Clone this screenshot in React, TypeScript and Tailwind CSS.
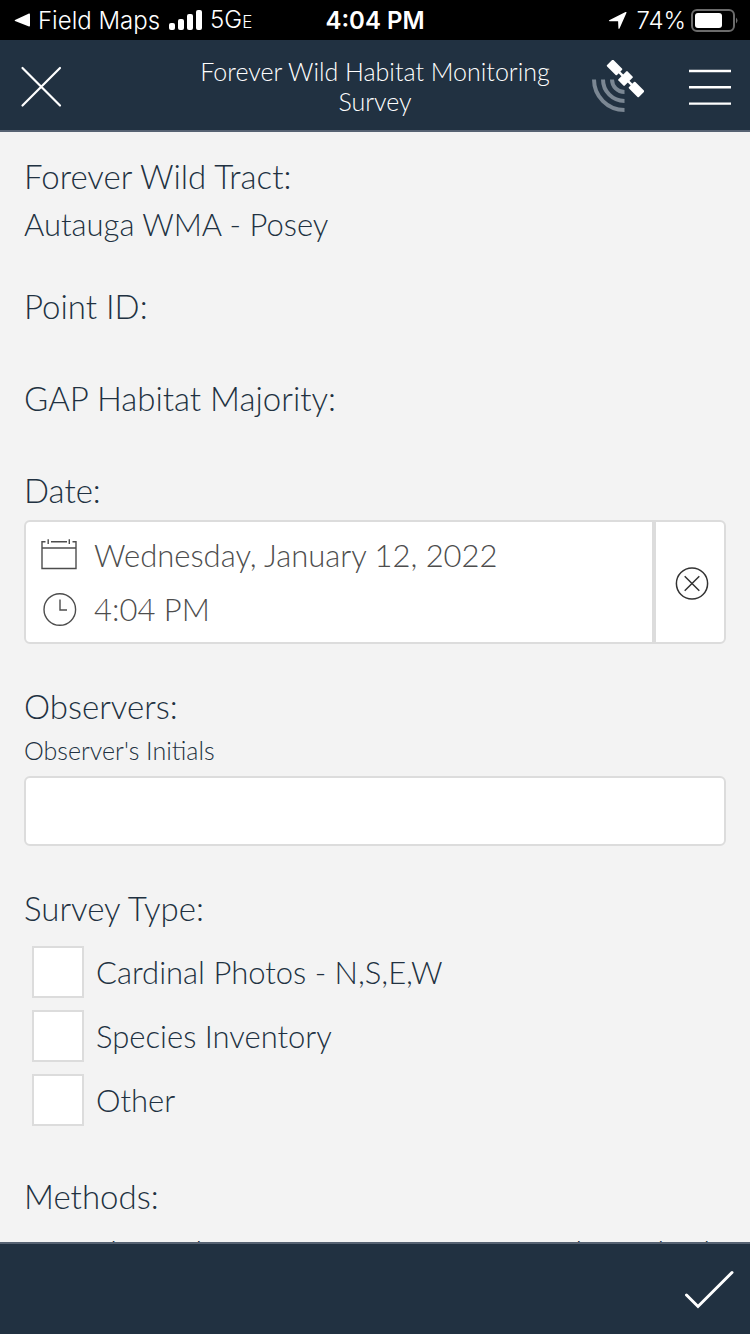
import { useState } from 'react';
import type { ReactNode } from 'react';

const surveyTypes = ['Cardinal Photos - N,S,E,W', 'Species Inventory', 'Other'];

const StatusBar = () => (
    <div className="grid h-10 shrink-0 grid-cols-[1fr_auto_1fr] items-center bg-black pl-3 pr-3 font-['Inter',sans-serif] text-2xl leading-10 text-white">
        <div className="flex items-center gap-2 whitespace-nowrap">
            <a href="#" className="flex items-center gap-2">
                <svg className="h-4 w-[18px]" viewBox="0 0 18 16" fill="currentColor">
                    <path d="M3 7 L17 .5 Q18 .2 18 1.5 V12.5 Q18 13.8 17 13.5 L3 8 Q2.2 7.5 3 7Z" />
                </svg>
                Field Maps
            </a>
            <svg className="ml-px h-[22px] w-[33px]" viewBox="0 0 33 22" fill="currentColor">
                <rect x="0" y="13" width="6" height="7" rx="2" />
                <rect x="9" y="9" width="6" height="11" rx="2" />
                <rect x="18" y="4" width="6" height="16" rx="2" />
                <rect x="27" y="0" width="6" height="20" rx="2" />
            </svg>
            <span>
                5G<span className="text-[17px]">E</span>
            </span>
        </div>
        <span className="font-semibold">4:04 PM</span>
        <div className="flex items-center justify-end gap-1">
            <svg className="h-5 w-5" viewBox="0 0 20 20" fill="currentColor">
                <path d="M1.2 9.2 L17.5 1 Q19 .5 18.4 2 L11.5 17.5 Q10.6 18.5 10.4 17 L10.1 10.2 L1.8 10.2 Q.2 10 1.2 9.2Z" />
            </svg>
            <span className="pl-1">74%</span>
            <svg className="h-6 w-12" viewBox="0 0 48 24">
                <rect x="2" y="1" width="42" height="21" rx="5" fill="none" stroke="#6b6b6b" strokeWidth="2" />
                <rect x="5" y="4" width="27" height="15" rx="3" fill="white" />
                <path d="M46 8.5 Q49 11.5 46 14.5Z" fill="#6b6b6b" />
            </svg>
        </div>
    </div>
);

const SatelliteIcon = () => (
    <svg className="h-[54px] w-[54px]" viewBox="0 0 54 54">
        <g fill="none" stroke="#7b8793" strokeWidth="4">
            <path d="M4 19.5 A30.5 30.5 0 0 0 34.5 50" />
            <path d="M13 19.5 A21.5 21.5 0 0 0 34.5 41" />
            <path d="M22 19.5 A12.5 12.5 0 0 0 34.5 32" />
        </g>
        <g fill="white" transform="translate(35.5 18.5) rotate(45)">
            <rect x="-22.5" y="-4.5" width="14" height="9" rx="1" />
            <rect x="8.5" y="-4.5" width="14" height="9" rx="1" />
            <rect x="-4.5" y="-6.5" width="9" height="13" rx="1" />
            <rect x="-9" y="-1.2" width="18" height="2.4" />
        </g>
    </svg>
);

const Header = () => (
    <header className="grid shrink-0 grid-cols-[160px_1fr_160px] items-center border-b-2 border-[#566272] bg-[#213141] text-white">
        <button aria-label="Close" className="ml-5 w-fit pt-1">
            <svg className="h-[42px] w-[42px]" viewBox="0 0 42 42" stroke="currentColor" strokeWidth="2.2" strokeLinecap="round">
                <path d="M2.5 2 L40 39.5 M40 2 L2.5 39.5" />
            </svg>
        </button>
        <h1 className="px-6 pb-[14px] pt-4 text-center text-[25px] leading-[30px]">Forever Wild Habitat Monitoring Survey</h1>
        <div className="flex items-center justify-between pr-[18px] pt-1">
            <button aria-label="Location status">
                <SatelliteIcon />
            </button>
            <button aria-label="Menu">
                <svg className="h-[38px] w-[44px]" viewBox="0 0 44 38" stroke="currentColor" strokeWidth="2.4">
                    <path d="M1 3 H43 M1 19.3 H43 M1 35.6 H43" />
                </svg>
            </button>
        </div>
    </header>
);

const Field = ({ label, children }: { label: string; children?: ReactNode }) => (
    <section>
        <h2 className="text-[33px] leading-10">{label}</h2>
        {children}
    </section>
);

const DateTimeField = () => {
    const [date, setDate] = useState('Wednesday, January 12, 2022');
    const [time, setTime] = useState('4:04 PM');

    const clear = () => {
        setDate('');
        setTime('');
    };

    return (
        <div className="mt-[10px] flex h-[124px] rounded-md border-2 border-[#dcdcdc] bg-white text-[#4d4d4d]">
            <div className="flex flex-1 flex-col justify-center gap-[14px] border-r-4 border-[#dcdcdc] pl-[14px]">
                <label className="flex items-center gap-4">
                    <svg className="h-10 w-[38px]" viewBox="0 0 38 40" fill="none" stroke="currentColor" strokeWidth="1.4">
                        <path d="M5.5 6.7 H2 V33.5 H36 V6.7 H32.5 M11 6.7 H27 M2 13 H36 M8.2 4.2 V9 M29.3 4.2 V9" />
                    </svg>
                    <input
                        aria-label="Date"
                        className="min-w-0 flex-1 outline-none"
                        value={date}
                        onChange={(e) => setDate(e.target.value)}
                    />
                </label>
                <label className="flex items-center gap-4">
                    <svg className="h-10 w-[38px]" viewBox="0 0 38 40" fill="none" stroke="currentColor" strokeWidth="1.4">
                        <circle cx="19.8" cy="20.5" r="15.8" />
                        <path d="M20 10.5 V21 H27" />
                    </svg>
                    <input
                        aria-label="Time"
                        className="min-w-0 flex-1 outline-none"
                        value={time}
                        onChange={(e) => setTime(e.target.value)}
                    />
                </label>
            </div>
            <button aria-label="Clear date" className="flex w-[68px] items-center justify-center pl-1" onClick={clear}>
                <svg className="h-9 w-9" viewBox="0 0 36 36" fill="none" stroke="#333333" strokeWidth="1.5">
                    <circle cx="18" cy="19.5" r="15.6" />
                    <path d="M10.7 12.2 L25.3 26.8 M25.3 12.2 L10.7 26.8" />
                </svg>
            </button>
        </div>
    );
};

const App = () => {
    const [checked, setChecked] = useState<string[]>([]);

    const toggle = (type: string) => {
        setChecked(checked.includes(type) ? checked.filter((t) => t !== type) : [...checked, type]);
    };

    return (
        <div className="flex h-screen flex-col bg-[#f3f3f3] font-['Lato',sans-serif] font-light text-[#213141]">
            <StatusBar />
            <Header />
            <main className="flex min-h-0 flex-1 flex-col gap-[42px] overflow-hidden px-6 pt-6 text-[31px] leading-10">
                <Field label="Forever Wild Tract:">
                    <p className="mt-2">Autauga WMA - Posey</p>
                </Field>
                <Field label="Point ID:">
                    <div className="h-[10px]" />
                </Field>
                <Field label="GAP Habitat Majority:">
                    <div className="h-[10px]" />
                </Field>
                <Field label="Date:">
                    <DateTimeField />
                </Field>
                <Field label="Observers:">
                    <label htmlFor="initials" className="mt-2 block text-[25px] leading-8">
                        Observer's Initials
                    </label>
                    <input
                        id="initials"
                        className="mt-[10px] block h-[70px] w-full rounded-md border-2 border-[#dcdcdc] bg-white px-4 outline-none"
                    />
                </Field>
                <Field label="Survey Type:">
                    <div className="mt-[18px] flex flex-col gap-3 pb-2 pl-2">
                        {surveyTypes.map((type) => (
                            <label key={type} className="flex items-center gap-3">
                                <input
                                    type="checkbox"
                                    className="h-[52px] w-[52px] appearance-none border-2 border-[#dcdcdc] bg-white checked:bg-[#213141]"
                                    checked={checked.includes(type)}
                                    onChange={() => toggle(type)}
                                />
                                {type}
                            </label>
                        ))}
                    </div>
                </Field>
                <Field label="Methods:">
                    <p className="mt-4 flex justify-between pr-4">
                        <span>Record our photos</span>
                        <span>each Cardinal</span>
                    </p>
                </Field>
            </main>
            <footer className="flex h-[92px] shrink-0 items-center justify-end border-t-2 border-[#566272] bg-[#213141] pr-4 text-white">
                <button aria-label="Submit survey">
                    <svg className="h-10 w-[50px]" viewBox="0 0 50 40" fill="none" stroke="currentColor" strokeWidth="3" strokeLinecap="round">
                        <path d="M2.5 26 L14 37.5 L48 3.5" />
                    </svg>
                </button>
            </footer>
        </div>
    );
};

export default App;
